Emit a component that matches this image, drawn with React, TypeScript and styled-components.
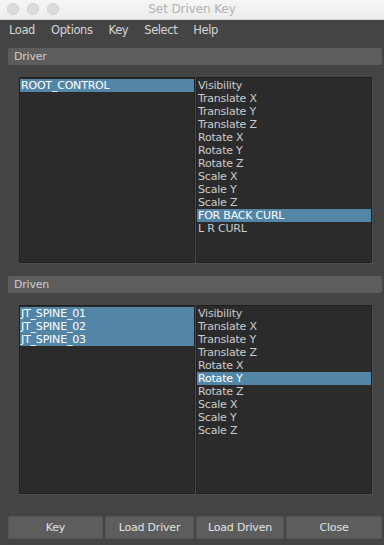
import React from 'react';
import styled, { createGlobalStyle } from 'styled-components';

const GlobalStyle = createGlobalStyle`
  html, body {
    margin: 0;
    padding: 0;
    background: #444444;
  }
  * {
    box-sizing: border-box;
  }
`;

const Window = styled.div`
  width: 384px;
  height: 545px;
  display: flex;
  flex-direction: column;
  background: #444444;
  font-family: 'DejaVu Sans', 'Liberation Sans', sans-serif;
  overflow: hidden;
`;

const TitleBar = styled.div`
  position: relative;
  height: 20px;
  flex: none;
  display: flex;
  align-items: center;
  justify-content: center;
  background: linear-gradient(#f6f6f6, #ececec);
  border-bottom: 1px solid #d4d4d4;
`;

const Lights = styled.div`
  position: absolute;
  left: 7px;
  top: 3px;
  display: flex;
  gap: 8px;
`;

const Light = styled.span`
  width: 12px;
  height: 12px;
  border-radius: 50%;
  background: #dcdcdc;
  border: 1px solid #d0d0d0;
`;

const Title = styled.span`
  font-size: 12px;
  letter-spacing: -0.1px;
  color: #b2b2b2;
  line-height: 19px;
`;

const MenuBar = styled.div`
  height: 20px;
  flex: none;
  display: flex;
  gap: 16px;
  padding-left: 9px;
  font-size: 11.5px;
  letter-spacing: -0.4px;
  line-height: 21px;
  color: #d6d6d6;
`;

const Header = styled.div<{ $top: number }>`
  height: 17px;
  line-height: 17px;
  margin: ${({ $top }) => $top}px 2px 0 8px;
  background: #5d5d5d;
  border-radius: 2px;
  padding-left: 6px;
  font-size: 11px;
  letter-spacing: -0.2px;
  color: #cdcdcd;
`;

const ListPair = styled.div<{ $height: number }>`
  display: grid;
  grid-template-columns: 176px 176px;
  gap: 1px;
  height: ${({ $height }) => $height}px;
  margin: 12px 12px 0 19px;
`;

const List = styled.div`
  background: #2b2b2b;
  border: 1px solid #1f1f1f;
  border-radius: 1px;
  padding-top: 1px;
  box-shadow: 1px 1px 0 #505050;
  overflow: hidden;
`;

const Row = styled.div<{ $selected?: boolean }>`
  height: 13px;
  line-height: 13px;
  padding-left: 1px;
  font-size: 11px;
  letter-spacing: -0.2px;
  white-space: nowrap;
  color: ${({ $selected }) => ($selected ? '#ffffff' : '#cbcbcb')};
  background: ${({ $selected }) => ($selected ? '#5285a6' : 'transparent')};
`;

const ButtonRow = styled.div`
  display: grid;
  grid-template-columns: 95px 89px 88px 96px;
  gap: 2px;
  margin: 22px 2px 0 8px;
`;

const Button = styled.div`
  height: 23px;
  line-height: 21px;
  text-align: center;
  background: #5d5d5d;
  border: 1px solid #555555;
  border-radius: 1px;
  font-size: 11px;
  letter-spacing: -0.2px;
  color: #e2e2e2;
`;

const driverAttrs = [
  'Visibility', 'Translate X', 'Translate Y', 'Translate Z',
  'Rotate X', 'Rotate Y', 'Rotate Z', 'Scale X', 'Scale Y', 'Scale Z',
  'FOR BACK CURL', 'L R CURL',
];

const drivenAttrs = [
  'Visibility', 'Translate X', 'Translate Y', 'Translate Z',
  'Rotate X', 'Rotate Y', 'Rotate Z', 'Scale X', 'Scale Y', 'Scale Z',
];

const renderRows = (items: string[], selected: string[]) =>
  items.map((item) => (
    <Row key={item} $selected={selected.includes(item)}>
      {item}
    </Row>
  ));

const App: React.FC = () => {
  return (
    <Window>
      <GlobalStyle />
      <TitleBar>
        <Lights>
          <Light />
          <Light />
          <Light />
        </Lights>
        <Title>Set Driven Key</Title>
      </TitleBar>

      <MenuBar>
        <span>Load</span>
        <span>Options</span>
        <span>Key</span>
        <span>Select</span>
        <span>Help</span>
      </MenuBar>

      <Header $top={8}>Driver</Header>
      <ListPair $height={186}>
        <List>{renderRows(['ROOT_CONTROL'], ['ROOT_CONTROL'])}</List>
        <List>{renderRows(driverAttrs, ['FOR BACK CURL'])}</List>
      </ListPair>

      <Header $top={13}>Driven</Header>
      <ListPair $height={189}>
        <List>
          {renderRows(
            ['JT_SPINE_01', 'JT_SPINE_02', 'JT_SPINE_03'],
            ['JT_SPINE_01', 'JT_SPINE_02', 'JT_SPINE_03'],
          )}
        </List>
        <List>{renderRows(drivenAttrs, ['Rotate Y'])}</List>
      </ListPair>

      <ButtonRow>
        <Button>Key</Button>
        <Button>Load Driver</Button>
        <Button>Load Driven</Button>
        <Button>Close</Button>
      </ButtonRow>
    </Window>
  );
};

export default App;
